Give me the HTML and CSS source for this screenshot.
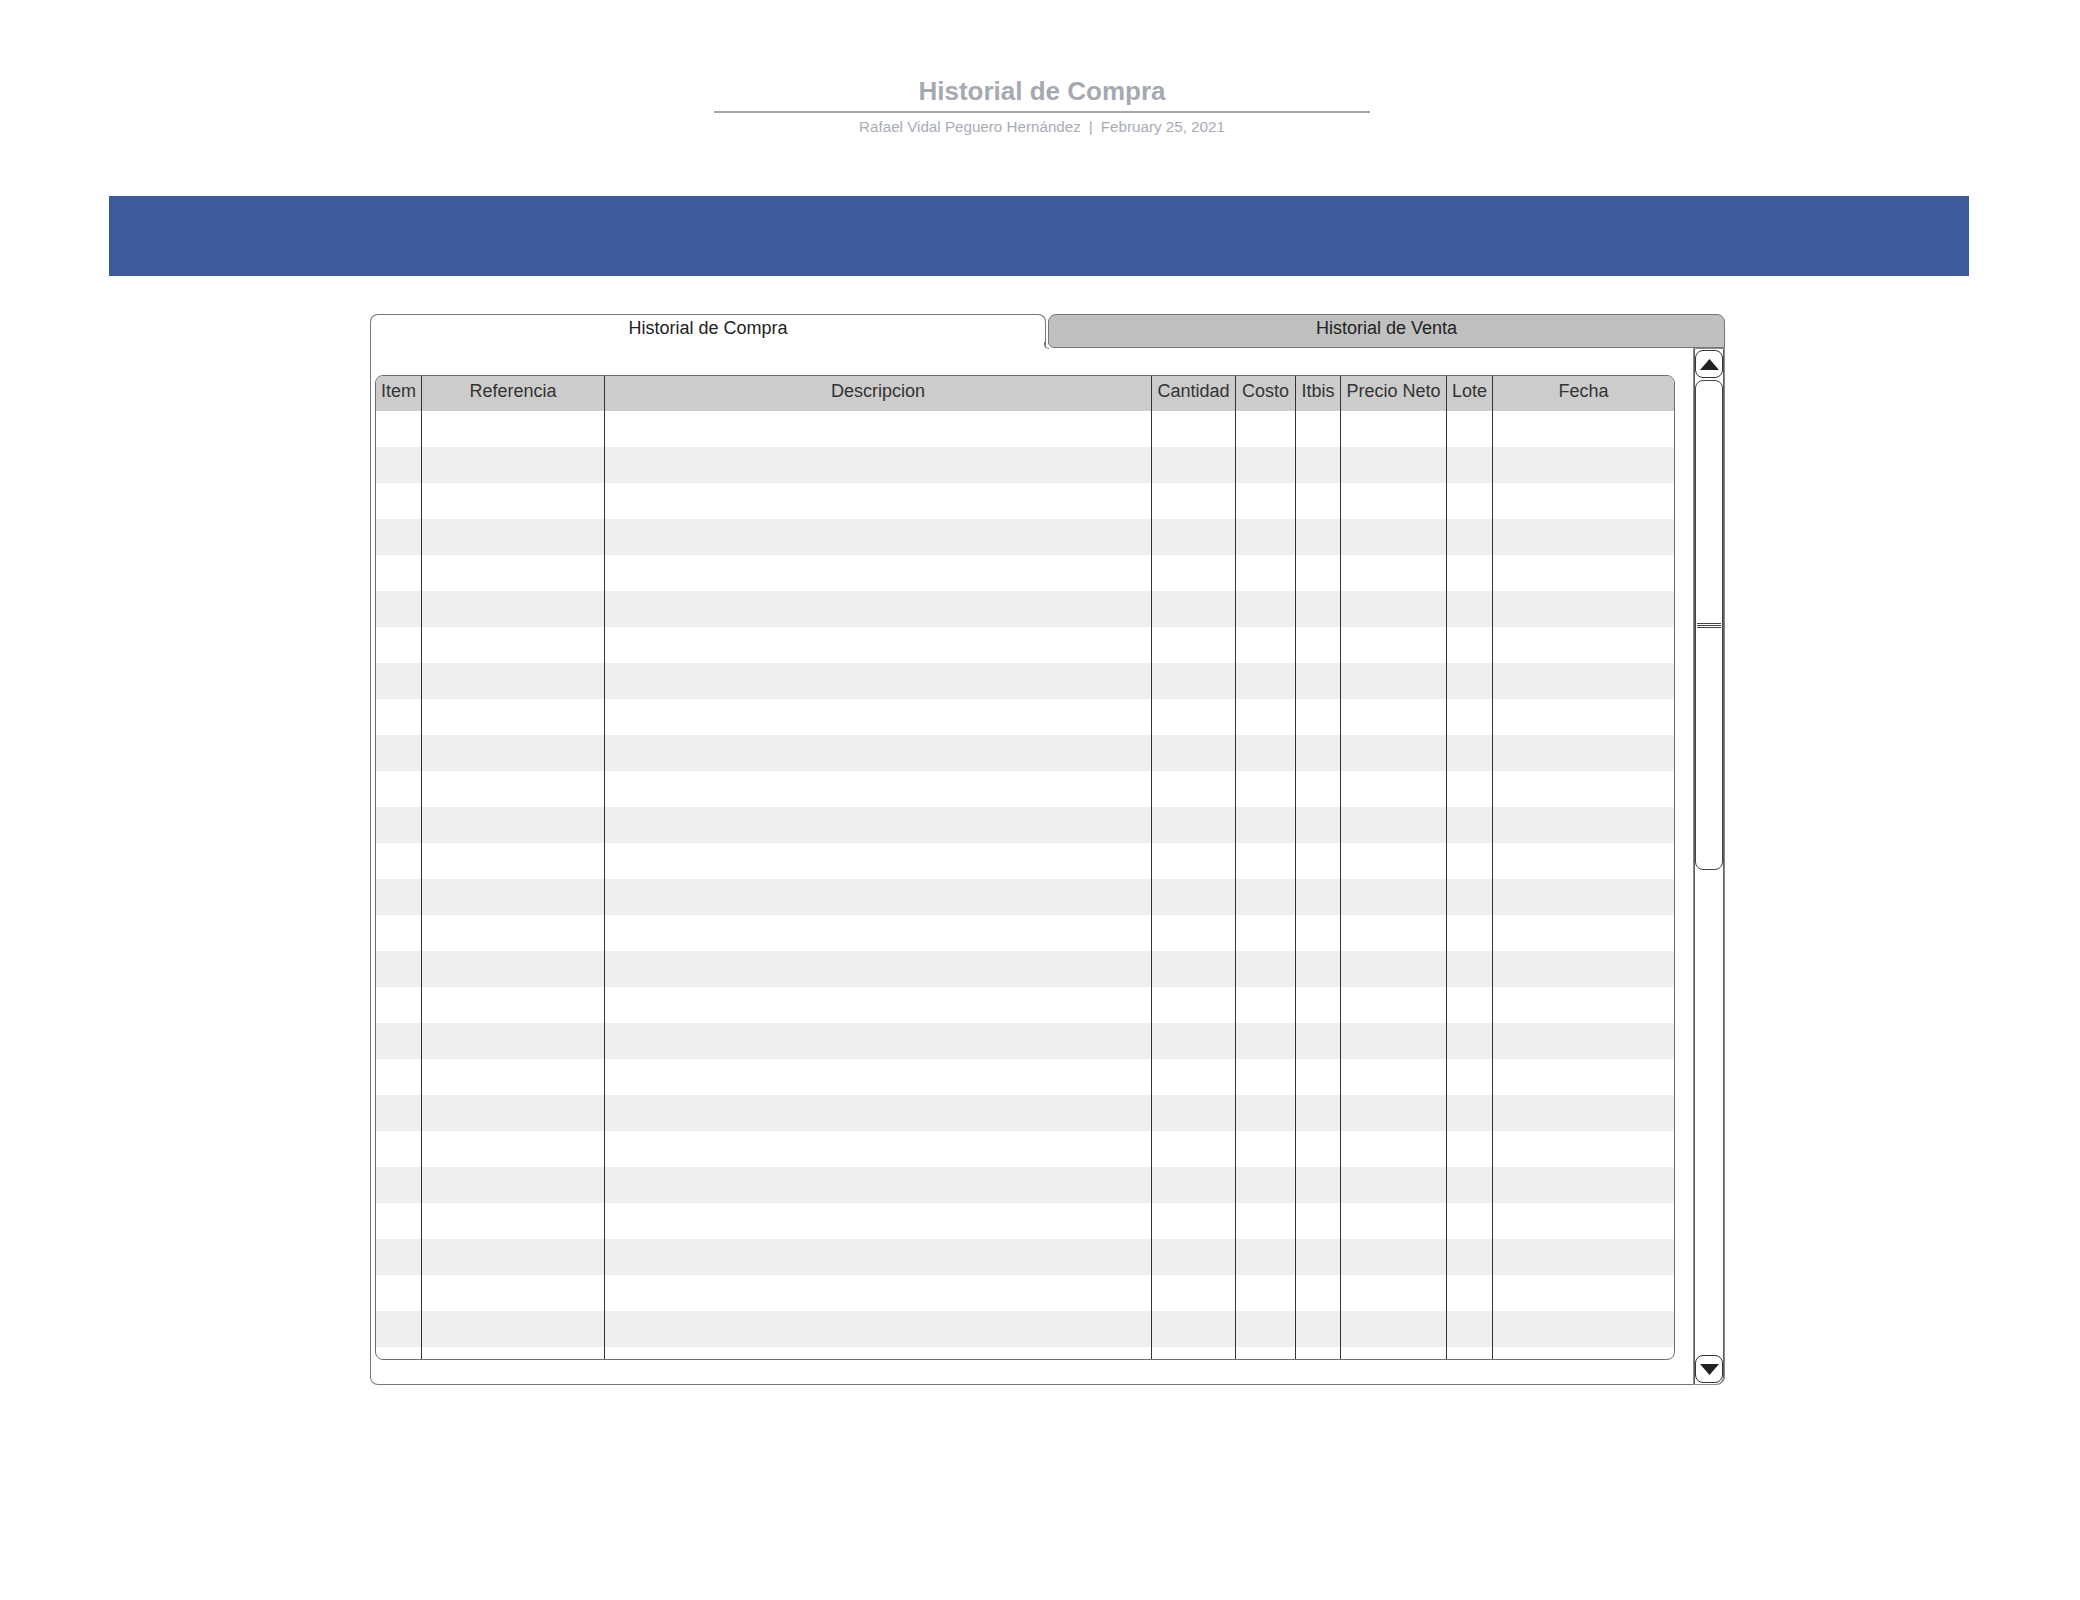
FILE: index.html
```html
<!DOCTYPE html>
<html lang="es">
<head>
<meta charset="utf-8">
<title>Historial de Compra</title>
<link rel="stylesheet" href="styles.css">
</head>
<body>
<header class="doc-head">
  <h1 class="doc-title">Historial de Compra</h1>
  <p class="doc-sub">Rafael Vidal Peguero Hernández<span class="sep">|</span>February 25, 2021</p>
</header>

<div class="banner"></div>

<section class="tabs">
  <div class="tab-row">
    <div class="tab tab-active">Historial de Compra</div>
    <div class="tab tab-inactive">Historial de Venta</div>
  </div>
  <div class="tab-body">
    <div class="tab-main">
      <div class="grid">
        <div class="col c-item"><div class="hcell">Item</div></div>
        <div class="col c-ref"><div class="hcell">Referencia</div></div>
        <div class="col c-desc"><div class="hcell">Descripcion</div></div>
        <div class="col c-cant"><div class="hcell">Cantidad</div></div>
        <div class="col c-costo"><div class="hcell">Costo</div></div>
        <div class="col c-itbis"><div class="hcell">Itbis</div></div>
        <div class="col c-precio"><div class="hcell">Precio Neto</div></div>
        <div class="col c-lote"><div class="hcell">Lote</div></div>
        <div class="col c-fecha"><div class="hcell">Fecha</div></div>
      </div>
    </div>
    <div class="scroll">
      <div class="sbtn">
        <svg width="19" height="11" viewBox="0 0 19 11"><polygon points="9.5,0 19,11 0,11" fill="#222"/></svg>
      </div>
      <div class="thumb"><div class="grip"></div></div>
      <div class="track-space"></div>
      <div class="sbtn">
        <svg width="19" height="11" viewBox="0 0 19 11"><polygon points="0,0 19,0 9.5,11" fill="#222"/></svg>
      </div>
    </div>
  </div>
</section>
</body>
</html>
```

FILE: styles.css
```css
* { box-sizing: border-box; }

body {
  margin: 0;
  background: #ffffff;
  font-family: "Liberation Sans", Arial, sans-serif;
  color: #222;
}

.doc-head {
  width: 656px;
  margin-left: 714px;
  padding-top: 76px;
  text-align: center;
}

.doc-title {
  margin: 0;
  font-size: 26px;
  line-height: 30px;
  font-weight: bold;
  color: #a5a9b2;
  padding-bottom: 5px;
  border-bottom: 2px solid #a3a7b0;
}

.doc-sub {
  margin: 5px 0 0;
  font-size: 15.2px;
  line-height: 18px;
  color: #a8acb5;
}

.sep { margin: 0 8px; }

.banner {
  width: 1860px;
  height: 80px;
  margin: 60px 0 0 109px;
  background: #3d5b9c;
}

.tabs {
  width: 1355px;
  margin: 38px 0 0 370px;
}

.tab-row {
  display: flex;
  gap: 2px;
  height: 34px;
}

.tab {
  height: 34px;
  text-align: center;
  font-size: 18px;
  line-height: 26px;
  color: #222;
  border: 1px solid #767676;
}

.tab-active {
  width: 676px;
  background: #fff;
  border-bottom: none;
  border-radius: 8px 8px 0 0;
  position: relative;
}

.tab-active::after {
  content: "";
  position: absolute;
  right: -4px;
  bottom: -1px;
  width: 4px;
  height: 6px;
  border-left: 1px solid #767676;
  border-bottom: 1px solid #767676;
  border-bottom-left-radius: 5px;
}

.tab-inactive {
  width: 677px;
  background: #c0c0c0;
  border-radius: 8px 8px 0 6px;
}

.tab-body {
  display: flex;
  height: 1037px;
}

.tab-main {
  width: 1323px;
  padding: 27px 18px 0 4px;
  border-left: 1px solid #767676;
  border-bottom: 1px solid #767676;
  border-bottom-left-radius: 8px;
}

.grid {
  display: flex;
  width: 1300px;
  height: 985px;
  border: 1px solid #6e6e6e;
  border-radius: 8px;
  overflow: hidden;
  background-color: #fff;
  background-image: repeating-linear-gradient(to bottom, #ffffff 0 36px, #efefef 36px 72px);
  background-position: 0 35px;
  background-repeat: repeat-y;
}

.col {
  height: 100%;
  border-right: 1px solid #333;
}

.col:last-child { border-right: none; }

.hcell {
  height: 35px;
  background: #cccccc;
  text-align: center;
  font-size: 18px;
  line-height: 30px;
  color: #333;
  white-space: nowrap;
}

.c-item { width: 46px; }
.c-ref { width: 183px; }
.c-desc { width: 547px; }
.c-cant { width: 84px; }
.c-costo { width: 60px; }
.c-itbis { width: 45px; }
.c-precio { width: 106px; }
.c-lote { width: 46px; }
.c-fecha { width: 181px; }

.scroll {
  width: 32px;
  height: 1037px;
  display: flex;
  flex-direction: column;
  padding: 1px;
  border: 1px solid #8a8a8a;
  box-shadow: inset 1px 0 0 #5e5e5e, inset -1px 0 0 #5e5e5e;
  border-radius: 0 0 8px 0;
  background: #fff;
}

.sbtn {
  height: 28px;
  flex: none;
  border: 1px solid #333;
  border-radius: 8px;
  display: flex;
  align-items: center;
  justify-content: center;
  background: #fff;
}

.thumb {
  height: 490px;
  margin-top: 2px;
  flex: none;
  border: 1px solid #444;
  border-radius: 8px;
  display: flex;
  align-items: center;
  justify-content: center;
}

.grip {
  width: 24px;
  height: 5px;
  border-top: 1px solid #444;
  border-bottom: 1px solid #444;
  background: linear-gradient(#fff 0 1px, #444 1px 2px, #fff 2px);
}

.track-space { flex: 1; }
```
